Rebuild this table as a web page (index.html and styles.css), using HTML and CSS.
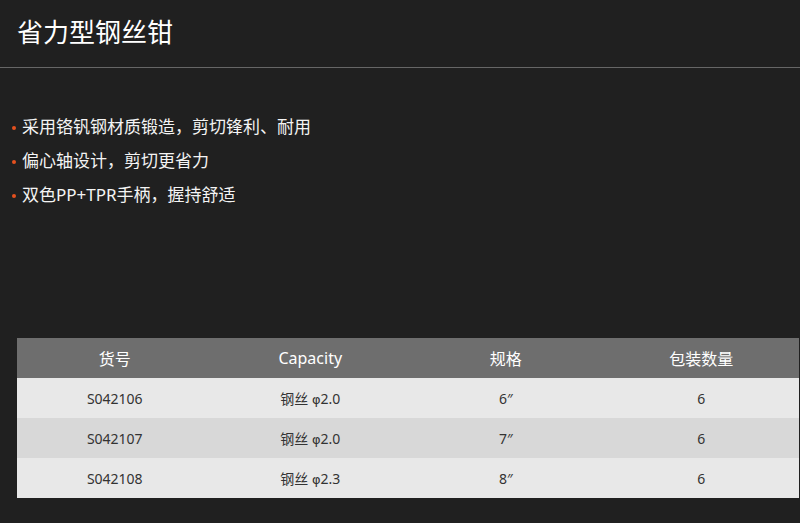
FILE: index.html
```html
<!DOCTYPE html>
<html lang="zh-CN">
<head>
<meta charset="utf-8">
<title>省力型钢丝钳</title>
<link rel="stylesheet" href="styles.css">
</head>
<body>
<header class="head">
  <h1 class="title">省力型钢丝钳</h1>
</header>
<ul class="features">
  <li class="feature">采用铬钒钢材质锻造，剪切锋利、耐用</li>
  <li class="feature">偏心轴设计，剪切更省力</li>
  <li class="feature">双色PP+TPR手柄，握持舒适</li>
</ul>
<table class="specs">
  <thead>
    <tr><th>货号</th><th>Capacity</th><th>规格</th><th>包装数量</th></tr>
  </thead>
  <tbody>
    <tr><td>S042106</td><td>钢丝 <span class="phi">φ</span>2.0</td><td>6″</td><td>6</td></tr>
    <tr><td>S042107</td><td>钢丝 <span class="phi">φ</span>2.0</td><td>7″</td><td>6</td></tr>
    <tr><td>S042108</td><td>钢丝 <span class="phi">φ</span>2.3</td><td>8″</td><td>6</td></tr>
  </tbody>
</table>
</body>
</html>
```
FILE: styles.css
```css
html, body {
  margin: 0;
  padding: 0;
  background: #202020;
}
body {
  font-family: "Noto Sans", "Noto Sans CJK SC", sans-serif;
  color: #fff;
}
.head {
  border-bottom: 1px solid #666;
}
.title {
  margin: 0;
  padding: 14px 17px 19px;
  font-family: "Noto Sans CJK SC", sans-serif;
  font-size: 26px;
  line-height: 34px;
  font-weight: normal;
  color: #fff;
}
.features {
  list-style: none;
  margin: 42px 0 0;
  padding: 0 0 0 12px;
}
.feature {
  display: flex;
  align-items: center;
  font-size: 17px;
  line-height: 34px;
  color: #f4f4f4;
}
.feature::before {
  content: "";
  width: 4px;
  height: 4px;
  border-radius: 50%;
  margin: 1px 6px 0 0;
  background: #e4501e;
  flex: none;
}
.specs {
  margin: 126px 1px 0 17px;
  width: 782px;
  border-collapse: collapse;
  table-layout: fixed;
}
.specs th, .specs td {
  height: 40px;
  padding: 0;
  text-align: center;
  vertical-align: middle;
}
.specs th {
  background: #6e6e6e;
  color: #fff;
  font-size: 16px;
  font-weight: normal;
}
.specs td {
  background: #e8e8e8;
  color: #333;
  font-size: 14px;
}
.specs tbody tr:nth-child(2) td {
  background: #d8d8d8;
}
.phi {
  font-family: "DejaVu Sans", sans-serif;
  font-size: 13px;
}
```
